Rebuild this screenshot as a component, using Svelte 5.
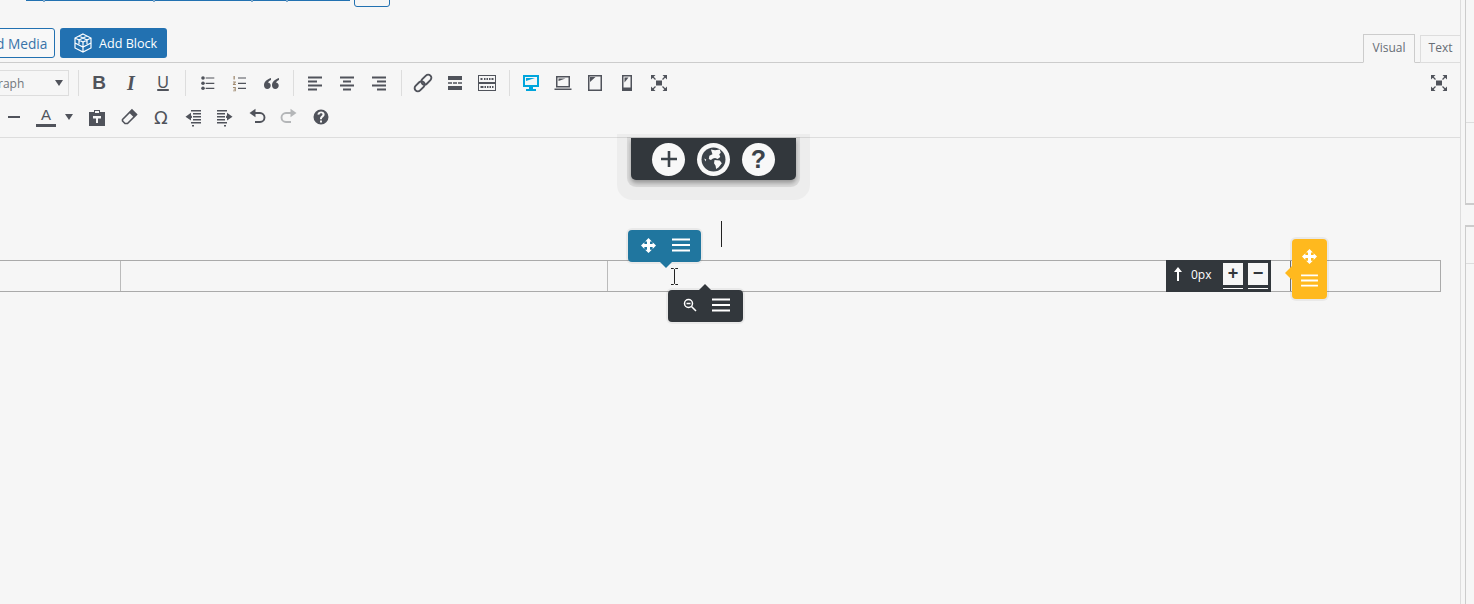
<script>
  const ticks = [43, 153, 251, 286];
  const row1a = [
    ['<circle cx="6" cy="5" r="1.800"/><circle cx="6" cy="10.300" r="1.800"/><circle cx="6" cy="15.300" r="1.800"/><path d="M8.700 4.400h8.600v1.200H8.700zM8.700 9.700h8.600v1.200H8.700zM8.700 14.700h8.600v1.200H8.700z"/>'],
    ['<path d="M9 4.400h8v1.200H9zM9 9.700h8v1.200H9zM9 14.700h8v1.200H9z"/><path d="M4.500 3h1.300v3.600H4.500zM4 8.600h2.800v1L5.200 11h1.700v.9H3.900V11l1.700-1.500H4zM4 14h2.800v4.200H4v-.8h1.800v-.9H4.600v-.7h1.200v-.9H4z" fill="#a08a70"/>'],
    ['<path d="M10 5C6 6.200 3 8.800 3 12.300 3 14.700 4.400 16 6.300 16s3.400-1.400 3.400-3.300-1.200-3-2.800-3.100c.4-1 1.600-2 3.100-2.700zM18 5c-4 1.200-7 3.800-7 7.300 0 2.400 1.400 3.700 3.300 3.700s3.400-1.400 3.400-3.300-1.200-3-2.800-3.100c.4-1 1.600-2 3.100-2.700z"/>']
  ];
  const row1b = [
    ['<path d="M3 3.500h14v2H3zM3 7.500h9v2H3zM3 11.500h14v2H3zM3 15.500h9v2H3z"/>'],
    ['<path d="M3 3.500h14v2H3zM6 7.500h8v2H6zM3 11.500h14v2H3zM6 15.500h8v2H6z"/>'],
    ['<path d="M3 3.500h14v2H3zM8 7.500h9v2H8zM3 11.500h14v2H3zM8 15.500h9v2H8z"/>']
  ];
  const link = '<g transform="rotate(-45 10 10)" fill="none" stroke="currentColor" stroke-width="1.900"><rect x="-.500" y="6.800" width="11.500" height="6.400" rx="3.200"/><rect x="9" y="6.800" width="11.500" height="6.400" rx="3.200"/></g>';
  const more = '<path d="M3 3h14v4H3zM3 9.200h4v1.600H3zM8 9.200h4v1.600H8zM13 9.200h4v1.600h-4zM3 13h14v4H3z"/>';
  const kbd = '<path fill-rule="evenodd" d="M1 2h18v16H1zm1 1v6h16V3zm0 8v6h16v-6z"/><path d="M3.500 5h2v2h-2zM7 5h1.500v2H7zM9.500 5H11v2H9.500zM12 5h1.500v2H12zM14.500 5h2v2h-2zM3.500 13h3v2h-3zM7.500 13h1.500v2H7.500zM10 13h1.500v2H10zM12.500 13h1.500v2h-1.500zM15 13h1.500v2H15z"/>';
  const expand = '<path d="M7 7.500h6v5H7z"/><path d="M2 2h4.500L2 6.500zM18 2v4.500L13.500 2zM2 18v-4.500L6.500 18zM18 18h-4.500l4.500-4.500z"/><path fill="none" stroke="currentColor" stroke-width="1.300" d="M3.500 3.500l3 3M16.500 3.500l-3 3M3.500 16.500l3-3M16.500 16.500l-3-3"/>';
  const row1c = [
    ['<path fill-rule="evenodd" d="M2 2h16v12h-6v2h3v2H5v-2h3v-2H2zm2 2v8h12V4z"/><path d="M5 5h9L5 8z"/>', 'cyan'],
    ['<path fill-rule="evenodd" d="M3 3h14v11.500H3zm1.500 1.500v8.500h11V4.500z"/><path d="M5.500 5.500h7l-7 2.500zM1.500 15.500h17V17h-17z"/>', ''],
    ['<path fill-rule="evenodd" d="M3 2h14v16H3zm1.500 1.500v13h11v-13z"/><path d="M5 4h5.500L5 9z"/>', ''],
    ['<path fill-rule="evenodd" d="M5 2h10v16H5zm1.500 1.500v11h7v-11z"/><path d="M7.500 4.500h4l-4 5z"/>', ''],
    [expand, '']
  ];
  const row2 = [
    ['<path fill-rule="evenodd" d="M2 5h5V3h6v2h5v14H2zm6-1v2h4V4zM6 9v2.500h3V16h2v-4.500h3V9z"/>', ''],
    ['<path fill="none" stroke="currentColor" stroke-width="1.600" d="M13 3l4.500 4.500-9 9H6L3.500 14v-1.500z"/><path d="M13 2.500L18 7.500l-3 3L10 5.500z"/>', ''],
    null,
    ['<path d="M8 3h10v1.500H8zM10 6h8v1.500h-8zM10 9h8v1.500h-8zM10 12h8v1.500h-8zM8 15h10v1.500H8zM9 18h2v1.500H9zM8 5.800 2.500 9.800 8 13.500v-2.600h.900V8.700H8z"/>', ''],
    ['<path d="M2 3h10v1.500H2zM2 6h8v1.500H2zM2 9h8v1.500H2zM2 12h8v1.500H2zM2 15h10v1.500H2zM9 18h2v1.500H9zM12 5.800l5.500 4L12 13.500v-2.600h-.900V8.700h.900z"/>', ''],
    ['<path fill="none" stroke="currentColor" stroke-width="1.900" d="M7.500 6H13a4.500 4.500 0 0 1 0 9H8"/><path d="M8.500 1.800v8.400L2.500 6z"/>', ''],
    ['<path fill="none" stroke="currentColor" stroke-width="1.900" d="M12.500 6H7a4.500 4.500 0 0 0 0 9h5"/><path d="M11.500 1.800v8.400l6-4.200z"/>', 'faint'],
    ['<path fill-rule="evenodd" d="M10 2.500a7.500 7.500 0 1 0 0 15 7.500 7.500 0 0 0 0-15zM9 12.200h2v-.8c0-1 2.600-1.500 2.600-4 0-1.900-1.500-3-3.500-3-2 0-3.400 1-3.700 3l2 .4c.2-1 .8-1.500 1.700-1.500.8 0 1.400.5 1.400 1.200 0 1.300-2.500 1.700-2.500 3.800zm0 1.300v2h2v-2z"/>', '']
  ];
  const move = '<path d="M10 0l4.500 4.500H12V8h3.500V5.500L20 10l-4.500 4.500V12H12v3.500h2.500L10 20l-4.500-4.500H8V12H4.500v2.500L0 10l4.500-4.500V8H8V4.500H5.500z"/>';
  const menu = '<path d="M0 1.500h18v2H0zM0 7h18v2H0zM0 12.500h18v2H0z"/>';
</script>

<div class="page">
  <div class="main">
    <div class="topline">
      <span class="url">
        {#each ticks as t}
          <i style="left: {t - 26}px"></i>
        {/each}
      </span>
      <span class="okbtn"></span>
    </div>
    <div class="mediabar">
      <div class="buttons">
        <button class="addmedia">Add Media</button>
        <button class="addblock">
          <svg width="20" height="20" viewBox="0 0 20 20" fill="none" stroke="currentColor" stroke-width="1.200"><path d="M10 1l8 4v10l-8 4-8-4V5zM2 5l8 4 8-4M10 9v10M6 3l8 4v4M14 3L6 7v4M2 10l8 4 8-4"/></svg>
          Add Block
        </button>
      </div>
      <div class="tabs">
        <span class="tab active">Visual</span>
        <span class="tab">Text</span>
      </div>
    </div>

    <div class="toolbar">
      <div class="row first">
        <div class="select"><span>Paragraph</span><i class="caret"></i></div>
        <span class="sep selsep"></span>
        <span class="btn glyph bold">B</span>
        <span class="btn glyph ital">I</span>
        <span class="btn glyph und">U</span>
        <span class="sep"></span>
        {#each row1a as ic}
          <span class="btn"><svg viewBox="0 0 20 20" width="20" height="20" fill="currentColor">{@html ic[0]}</svg></span>
        {/each}
        <span class="sep"></span>
        {#each row1b as ic}
          <span class="btn"><svg viewBox="0 0 20 20" width="20" height="20" fill="currentColor">{@html ic[0]}</svg></span>
        {/each}
        <span class="sep"></span>
        <span class="btn"><svg viewBox="0 0 20 20" width="20" height="20" fill="currentColor">{@html link}</svg></span>
        <span class="btn"><svg viewBox="0 0 20 20" width="20" height="20" fill="currentColor">{@html more}</svg></span>
        <span class="btn"><svg viewBox="0 0 20 20" width="20" height="20" fill="currentColor">{@html kbd}</svg></span>
        <span class="sep"></span>
        {#each row1c as ic}
          <span class="btn {ic[1]}"><svg viewBox="0 0 20 20" width="20" height="20" fill="currentColor">{@html ic[0]}</svg></span>
        {/each}
        <span class="btn end"><svg viewBox="0 0 20 20" width="20" height="20" fill="currentColor">{@html expand}</svg></span>
      </div>
      <div class="row second">
        <span class="btn hr"><i></i></span>
        <span class="btn color"><b>A</b><i></i></span>
        <i class="caret small"></i>
        {#each row2 as ic}
          {#if ic}
            <span class="btn {ic[1]}"><svg viewBox="0 0 20 20" width="20" height="20" fill="currentColor">{@html ic[0]}</svg></span>
          {:else}
            <span class="btn glyph omega">Ω</span>
          {/if}
        {/each}
      </div>
    </div>

    <div class="canvas">
      <div class="caretline"></div>
      <div class="table">
        <div class="cell c1"></div>
        <div class="cell c2"></div>
        <div class="cell c3"></div>
        <div class="cell c4"></div>
      </div>

      <div class="addpanel">
        <span class="round"><svg viewBox="0 0 20 20" width="20" height="20" fill="currentColor"><path d="M8.700 2h2.600v6.700H18v2.600h-6.700V18H8.700v-6.700H2V8.700h6.700z"/></svg></span>
        <span class="round"><svg viewBox="0 0 24 24" width="25" height="25"><circle cx="12" cy="12" r="11.500" fill="#3c434a"/><path fill="#f8f8f8" d="M9.500 2.500l4 .5 4.500-.5 1 3-1.500 1.500 1 2.500-2.500 2-2.500-1-2 .5-2 1.500-2-1 .5-3 3-1.500zM13 12.500l5 .5 2 2.500-3 4-2.500 1.500-.5-3-1.500-2.500zM3 11l2 1-.5 2z"/></svg></span>
        <span class="round q">?</span>
      </div>

      <div class="bluebar">
        <svg class="mv" viewBox="0 0 20 20" width="15" height="15" fill="currentColor">{@html move}</svg>
        <svg viewBox="0 0 18 16" width="18" height="16" fill="currentColor">{@html menu}</svg>
      </div>

      <div class="darkbar">
        <svg viewBox="0 0 14 14" width="14" height="14" fill="none" stroke="currentColor" stroke-width="1.500"><circle cx="5.500" cy="5.500" r="4"/><path d="M8.500 8.500l4.500 4.500M3.500 5.500h4"/></svg>
        <svg viewBox="0 0 18 16" width="18" height="16" fill="currentColor">{@html menu}</svg>
      </div>

      <svg class="ibeam" viewBox="0 0 9 17" width="9" height="17" fill="none" stroke="#222" stroke-width="1"><path d="M1 .5h2.500L4.500 1.500 5.500.5H8M4.500 1.500v14M1 16.500h2.500l1-1 1 1H8"/></svg>

      <div class="spacing">
        <span class="arrow">
          <svg viewBox="0 0 8 14" width="8" height="14" fill="currentColor"><path d="M4 0l4 5H5v9H3V5H0z"/></svg>
        </span>
        <span class="val">0px</span>
        <span class="stepper">+</span>
        <span class="stepper">−</span>
      </div>

      <div class="yellowbar">
        <svg viewBox="0 0 20 20" width="15" height="15" fill="currentColor">{@html move}</svg>
        <svg viewBox="0 0 18 16" width="17" height="15" fill="currentColor">{@html menu}</svg>
      </div>
    </div>
  </div>

  <div class="side">
    <div class="panel one"><div class="head"></div></div>
    <div class="panel two"><div class="head"></div></div>
  </div>
</div>

<style>
  :global(body) {
    margin: 0;
    background: #f6f6f6;
    font-family: "Open Sans", sans-serif;
    overflow: hidden;
  }
  .page {
    display: flex;
    width: 1474px;
    height: 604px;
    overflow: hidden;
    background: #f6f6f6;
  }
  .main {
    width: 1461px;
    flex: none;
    display: flex;
    flex-direction: column;
    border-right: 1px solid #ddd;
    box-sizing: border-box;
  }
  .topline {
    height: 8px;
    flex: none;
    position: relative;
  }
  .url {
    position: absolute;
    left: 26px;
    top: 0;
    width: 324px;
    height: 1px;
    background: #2271b1;
  }
  .url i {
    position: absolute;
    top: 0;
    width: 2px;
    height: 2px;
    background: #7fa9cc;
  }
  .okbtn {
    position: absolute;
    left: 354px;
    top: -8px;
    width: 36px;
    height: 15px;
    box-sizing: border-box;
    border: 1px solid #2271b1;
    border-radius: 3px;
  }
  .mediabar {
    height: 55px;
    flex: none;
    display: flex;
    justify-content: space-between;
    box-sizing: border-box;
    border-bottom: 1px solid #ccc;
    width: 1461px;
  }
  .buttons {
    display: flex;
    gap: 5px;
    margin-top: 20px;
    margin-left: -30px;
    align-items: flex-start;
  }
  button {
    font-family: "Open Sans", sans-serif;
    font-size: 13px;
    height: 30px;
    border-radius: 3px;
    box-sizing: border-box;
    display: flex;
    align-items: center;
  }
  .addmedia {
    width: 85px;
    background: #f8f8f8;
    border: 1px solid #2271b1;
    color: #3873a8;
    font-size: 13.700px;
    padding: 0 0 0 8px;
    white-space: nowrap;
  }
  .addblock {
    width: 107px;
    background: #2271b1;
    border: 0;
    color: #fff;
    font-size: 12.600px;
    padding: 0 0 0 13px;
    gap: 6px;
  }
  .tabs {
    display: flex;
    gap: 5px;
    align-items: flex-end;
    margin-top: 26px;
    margin-bottom: -1px;
  }
  .tab {
    font-size: 12px;
    color: #666d75;
    height: 28px;
    box-sizing: border-box;
    border: 1px solid #ddd;
    display: flex;
    align-items: center;
    justify-content: center;
    width: 41px;
    padding-bottom: 4px;
  }
  .tab.active {
    width: 52px;
    height: 29px;
    border-color: #ccc;
    border-bottom-color: #f6f6f6;
    padding-bottom: 2px;
  }
  .toolbar {
    height: 75px;
    flex: none;
    box-sizing: border-box;
    border-bottom: 1px solid #ddd;
    color: #50535b;
  }
  .row {
    display: flex;
    align-items: center;
    height: 34px;
  }
  .first {
    margin-top: 3px;
    padding-right: 5px;
  }
  .select {
    width: 111px;
    margin-left: -42px;
    flex: none;
    height: 26px;
    box-sizing: border-box;
    border: 1px solid #ddd;
    display: flex;
    align-items: center;
    justify-content: space-between;
    font-size: 12px;
    color: #72777c;
    padding: 0 5px 0 7px;
  }
  .caret {
    display: block;
    width: 0;
    height: 0;
    border: 4px solid transparent;
    border-top: 6px solid #50535b;
    border-bottom: 0;
  }
  .btn {
    width: 32px;
    height: 32px;
    flex: none;
    display: flex;
    align-items: center;
    justify-content: center;
  }
  .sep {
    width: 1px;
    height: 26px;
    background: #ddd;
    flex: none;
    margin: 0 5px 0 6px;
  }
  .selsep {
    margin: 0 4px 0 9px;
  }
  .glyph {
    font-family: "Liberation Sans", sans-serif;
    font-size: 19px;
    font-weight: 700;
  }
  .ital {
    font-style: italic;
    font-family: "Liberation Serif", serif;
    font-size: 20px;
  }
  .und {
    text-decoration: underline;
    text-decoration-thickness: 2px;
    font-weight: 400;
    font-size: 16px;
  }
  .omega {
    font-size: 18px;
    font-weight: 400;
    font-family: "DejaVu Sans", sans-serif;
  }
  .cyan {
    color: #00a5dc;
  }
  .faint {
    color: #b4b6b8;
  }
  .end {
    margin-left: auto;
  }
  .second {
    margin-left: -2px;
  }
  .hr i {
    display: block;
    width: 12px;
    height: 2px;
    background: #50535b;
  }
  .color {
    width: 32px;
    flex-direction: column;
    gap: 0;
  }
  .color b {
    font-weight: 400;
    font-size: 15px;
    line-height: 16px;
    font-family: "Liberation Sans", sans-serif;
  }
  .color i {
    width: 20px;
    height: 2.500px;
    background: #50535b;
    margin-top: 1px;
  }
  .small {
    margin: 0 8px 0 3px;
  }
  .canvas {
    flex: 1;
    position: relative;
    padding-top: 122px;
  }
  .table {
    display: flex;
    height: 32px;
    margin-left: -1px;
    width: 1442px;
    box-sizing: border-box;
    border: 1px solid #aaa;
  }
  .cell {
    height: 100%;
    box-sizing: border-box;
    border-right: 1px solid #bbb;
  }
  .c1 { width: 121px; }
  .c2 { width: 487px; }
  .c3 { width: 683px; border-right-color: #777; }
  .c4 { flex: 1; border-right: 0; }
  .caretline {
    position: absolute;
    left: 721px;
    top: 83px;
    width: 1px;
    height: 26px;
    background: #222;
  }
  .addpanel {
    position: absolute;
    left: 631px;
    top: 0;
    width: 165px;
    height: 42px;
    background: #32373c;
    border-radius: 0 0 5px 5px;
    display: flex;
    justify-content: center;
    gap: 12px;
    align-items: center;
    box-shadow: 0 3px 4px rgba(0,0,0,.3), 0 3px 0 4px rgba(0,0,0,.08), 0 6px 0 14px rgba(0,0,0,.035);
    clip-path: inset(-4px -20px -30px -20px round 0 0 20px 20px);
    color: #3c434a;
  }
  .round {
    width: 33px;
    height: 33px;
    border-radius: 50%;
    background: #f8f8f8;
    display: flex;
    align-items: center;
    justify-content: center;
  }
  .q {
    font-family: "Liberation Sans", sans-serif;
    font-weight: 700;
    font-size: 25px;
    color: #3c434a;
  }
  .bluebar, .darkbar {
    position: absolute;
    display: flex;
    align-items: center;
    box-shadow: 0 0 0 2px rgba(0,0,0,.05);
    color: #fff;
    padding-bottom: 2px;
  }
  .bluebar {
    left: 628px;
    top: 92px;
    width: 73px;
    height: 32px;
    background: #20769f;
    border-radius: 4px;
    padding-left: 13px;
    gap: 16px;
    box-sizing: border-box;
  }
  .bluebar::after {
    content: "";
    position: absolute;
    left: 32px;
    bottom: -6px;
    border: 6px solid transparent;
    border-top-color: #20769f;
    border-bottom: 0;
  }
  .darkbar {
    left: 668px;
    top: 152px;
    width: 75px;
    height: 32px;
    background: #32373c;
    border-radius: 4px;
    padding-left: 15px;
    gap: 15px;
    box-sizing: border-box;
  }
  .darkbar::before {
    content: "";
    position: absolute;
    left: 31px;
    top: -6px;
    border: 6px solid transparent;
    border-bottom-color: #32373c;
    border-top: 0;
  }
  .ibeam {
    position: absolute;
    left: 670px;
    top: 130px;
  }
  .spacing {
    position: absolute;
    left: 1166px;
    top: 122px;
    width: 105px;
    height: 32px;
    background: #32373c;
    color: #fff;
    display: flex;
    align-items: center;
    font-size: 12px;
    box-sizing: border-box;
    padding-left: 8px;
  }
  .arrow {
    display: flex;
    flex: none;
    margin: 0 9px 4px 0;
  }
  .val {
    width: 32px;
    flex: none;
    margin-bottom: 3px;
  }
  .stepper {
    width: 20px;
    height: 22px;
    flex: none;
    background: #f6f6f6;
    color: #32373c;
    font-family: "Liberation Sans", sans-serif;
    font-weight: 700;
    font-size: 18px;
    line-height: 21px;
    text-align: center;
    margin: 0 5px 4px 0;
    box-shadow: 0 3px 0 #32373c, 0 4px 0 #fff;
  }
  .stepper:last-child {
    margin-right: 0;
  }
  .yellowbar {
    position: absolute;
    left: 1292px;
    top: 101px;
    width: 35px;
    height: 60px;
    background: #ffb91e;
    border-radius: 4px;
    color: #fff;
    display: flex;
    flex-direction: column;
    align-items: center;
    justify-content: center;
    gap: 9px;
    padding-bottom: 1px;
    box-sizing: border-box;
    box-shadow: 0 0 0 2px rgba(0,0,0,.05);
  }
  .yellowbar::before {
    content: "";
    position: absolute;
    left: -7px;
    top: 27px;
    border: 7px solid transparent;
    border-right-color: #ffb91e;
    border-left: 0;
  }
  .side {
    flex: 1;
    display: flex;
    flex-direction: column;
    gap: 20px;
    padding-left: 4px;
  }
  .panel {
    border-style: solid;
    border-width: 2px 0 2px 1px;
    border-color: #ccc;
    box-sizing: border-box;
  }
  .one {
    height: 206px;
    margin-top: -1px;
    border-top: 0;
  }
  .one .head {
    height: 123px;
    border-bottom: 1px solid #ddd;
  }
  .two {
    flex: 1;
    border-bottom: 0;
  }
  .two .head {
    height: 36px;
    border-bottom: 1px solid #ddd;
  }
</style>
